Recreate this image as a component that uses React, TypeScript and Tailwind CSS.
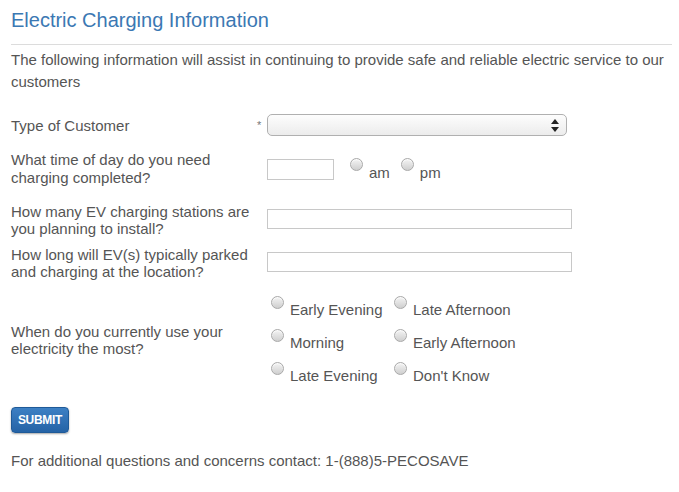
import { useState } from "react";

function Radio({ checked, onClick }: { checked?: boolean; onClick?: () => void }) {
  return (
    <span
      onClick={onClick}
      className="inline-block w-[13px] h-[13px] rounded-full border border-[#a9a9a9] bg-gradient-to-b from-[#f4f4f4] to-[#cfcfcf] shadow-[inset_0_1px_1px_rgba(255,255,255,0.8)] shrink-0 relative"
    >
      {checked && (
        <span className="absolute left-[3px] top-[3px] w-[5px] h-[5px] rounded-full bg-[#333]" />
      )}
    </span>
  );
}

function Option({ label, checked, onClick }: { label: string; checked: boolean; onClick: () => void }) {
  return (
    <label className="flex items-start gap-[6px] cursor-pointer" onClick={onClick}>
      <Radio checked={checked} />
      <span className="mt-[5px] leading-[17px]">{label}</span>
    </label>
  );
}

export default function App() {
  const [ampm, setAmpm] = useState<string | null>(null);
  const [usage, setUsage] = useState<string | null>(null);

  const usageOptions = [
    "Early Evening",
    "Late Afternoon",
    "Morning",
    "Early Afternoon",
    "Late Evening",
    "Don't Know",
  ];

  return (
    <div className="w-[679px] h-[492px] bg-white pl-[11px] pr-[7px] font-['Liberation_Sans',Arial,sans-serif] text-[15px] text-[#555]">
      {/* Title */}
      <h1 className="pt-[8px] text-[20px] leading-[24px] text-[#3b78b3]">
        Electric Charging Information
      </h1>
      <div className="mt-[12px] border-t border-[#dcdcdc]" />
      <p className="mt-[4px] leading-[22px]">
        The following information will assist in continuing to provide safe and reliable electric service to our
        customers
      </p>

      {/* Form */}
      <div className="mt-[21px] flex items-center h-[22px]">
        <div className="w-[246px] leading-[17px]">Type of Customer</div>
        <div className="w-[10px] text-[11px] text-[#777]">*</div>
        <div className="w-[300px] h-[22px] rounded-[5px] border border-[#b0b0b0] bg-gradient-to-b from-[#fdfdfd] to-[#ececec] flex items-center justify-end pr-[7px]">
          <svg width="8" height="13" viewBox="0 0 8 13">
            <path d="M4 0 L8 5 L0 5 Z" fill="#222" />
            <path d="M0 8 L8 8 L4 13 Z" fill="#222" />
          </svg>
        </div>
      </div>

      <div className="mt-[15px] flex items-center">
        <div className="w-[256px] leading-[18px]">
          What time of day do you need
          <br />
          charging completed?
        </div>
        <input className="w-[67px] h-[21px] border border-[#c8c8c8] outline-none" />
        <div className="ml-[16px] flex items-start gap-[6px]">
          <Radio checked={ampm === "am"} onClick={() => setAmpm("am")} />
          <span className="mt-[6px] leading-[17px]">am</span>
        </div>
        <div className="ml-[11px] flex items-start gap-[6px]">
          <Radio checked={ampm === "pm"} onClick={() => setAmpm("pm")} />
          <span className="mt-[6px] leading-[17px]">pm</span>
        </div>
      </div>

      <div className="mt-[16px] flex items-center">
        <div className="w-[256px] leading-[17px]">
          How many EV charging stations are
          <br />
          you planning to install?
        </div>
        <input className="w-[305px] h-[20px] border border-[#c8c8c8] outline-none -mt-[3px]" />
      </div>

      <div className="mt-[9px] flex items-center">
        <div className="w-[256px] leading-[17px]">
          How long will EV(s) typically parked
          <br />
          and charging at the location?
        </div>
        <input className="w-[305px] h-[20px] border border-[#c8c8c8] outline-none -mt-[3px]" />
      </div>

      <div className="mt-[16px] flex items-center">
        <div className="w-[260px] leading-[17px]">
          When do you currently use your
          <br />
          electricity the most?
        </div>
        <div className="grid grid-cols-[123px_auto] gap-y-[11px]">
          {usageOptions.map((o) => (
            <Option key={o} label={o} checked={usage === o} onClick={() => setUsage(o)} />
          ))}
        </div>
      </div>

      <button className="mt-[23px] w-[58px] h-[26px] rounded-[4px] bg-gradient-to-b from-[#3d80c4] to-[#2563a6] border border-[#1f5a98] text-white text-[12px] font-bold tracking-tight shadow-[0_1px_2px_rgba(0,0,0,0.35)]">
        SUBMIT
      </button>

      <p className="mt-[18px] leading-[20px]">
        For additional questions and concerns contact: 1-(888)5-PECOSAVE
      </p>
    </div>
  );
}
